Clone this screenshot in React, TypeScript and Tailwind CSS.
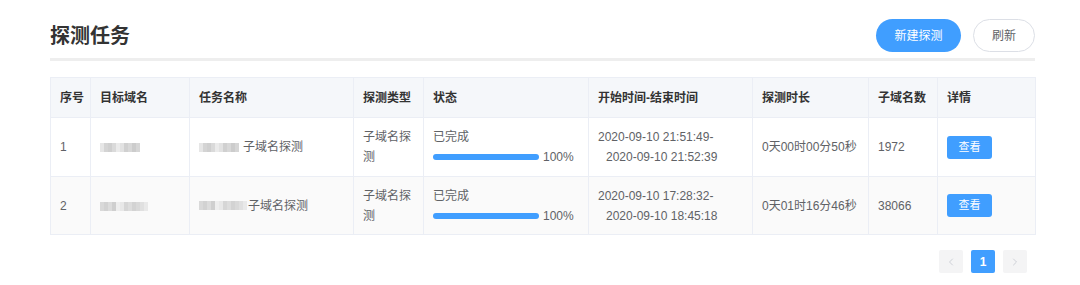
import { ChevronLeft, ChevronRight } from 'lucide-react';

const font = { fontFamily: '"Liberation Sans", "Noto Sans CJK SC", sans-serif' };

// pixelated (redacted) domain names
const mosaicA = ['#e6e6e6', '#d4d4d4', '#cfcfcf', '#dadada', '#ebebeb', '#e2e2e2', '#d0d0d0', '#d8d8d8', '#cccccc', '#d6d6d6'];
const mosaicB = ['#d9d9d9', '#d2d2d2', '#dcdcdc', '#cfcfcf', '#eeeeee', '#e8e8e8', '#d6d6d6', '#dddddd', '#d3d3d3', '#d9d9d9', '#e0e0e0', '#e9e9e9'];

const rows = [
  {
    id: 1,
    mosaic: mosaicA,
    start: '2020-09-10 21:51:49-',
    end: '2020-09-10 21:52:39',
    duration: '0天00时00分50秒',
    count: '1972',
  },
  {
    id: 2,
    mosaic: mosaicB,
    start: '2020-09-10 17:28:32-',
    end: '2020-09-10 18:45:18',
    duration: '0天01时16分46秒',
    count: '38066',
  },
];

const headers = ['序号', '目标域名', '任务名称', '探测类型', '状态', '开始时间-结束时间', '探测时长', '子域名数', '详情'];
const widths = [40, 99, 164, 70, 165, 164, 116, 69, 98];

const Mosaic = ({ cells }: { cells: string[] }) => (
  <span className="inline-flex align-middle">
    {cells.map((c, i) => (
      <span key={i} className="w-[4px] h-[9px]" style={{ backgroundColor: c }} />
    ))}
  </span>
);

const App = () => {
  return (
    <div className="w-[1080px] h-[285px] bg-white" style={font}>
      <div className="ml-[50px] w-[985px] pt-[19px]">
        <div className="flex items-center justify-between h-[33px]">
          <h1 className="text-[20px] font-bold text-[#333]">探测任务</h1>
          <div className="flex gap-3">
            <button className="w-[85px] h-[33px] rounded-full bg-[#409eff] text-white text-[12px]">新建探测</button>
            <button className="w-[62px] h-[33px] rounded-full border border-[#dcdfe6] bg-white text-[#606266] text-[12px]">刷新</button>
          </div>
        </div>
        <div className="mt-[6px] h-[3px] bg-[#eeeeee]" />

        <table className="mt-[16px] w-[985px] table-fixed border-collapse text-[12px]">
          <colgroup>
            {widths.map((w, i) => (
              <col key={i} style={{ width: w }} />
            ))}
          </colgroup>
          <thead>
            <tr className="h-[40px] bg-[#f5f7fa]">
              {headers.map((h) => (
                <th key={h} className="border border-[#ebeef5] pl-[9px] text-left font-bold text-[#333]">
                  {h}
                </th>
              ))}
            </tr>
          </thead>
          <tbody className="text-[#606266]">
            {rows.map((r, i) => (
              <tr key={r.id} className={i === 1 ? 'h-[58px] bg-[#fafafa]' : 'h-[59px] bg-white'}>
                <td className="border border-[#ebeef5] pl-[9px]">{r.id}</td>
                <td className="border border-[#ebeef5] pl-[9px]">
                  <Mosaic cells={r.mosaic} />
                </td>
                <td className="border border-[#ebeef5] pl-[9px]">
                  <Mosaic cells={r.mosaic} />
                  <span className={`align-middle ${i === 0 ? 'ml-[4px]' : 'ml-[1px]'}`}>子域名探测</span>
                </td>
                <td className="border border-[#ebeef5] pl-[9px] pr-[10px] leading-[20px]">子域名探测</td>
                <td className="border border-[#ebeef5] pl-[9px] leading-[20px]">
                  <div>已完成</div>
                  <div className="flex items-center">
                    <div className="w-[106px] h-[6px] rounded-full bg-[#409eff]" />
                    <span className="ml-[4px]">100%</span>
                  </div>
                </td>
                <td className="border border-[#ebeef5] pl-[9px] leading-[20px] whitespace-nowrap">
                  <div>{r.start}</div>
                  <div className="pl-[8px]">{r.end}</div>
                </td>
                <td className="border border-[#ebeef5] pl-[9px] whitespace-nowrap">{r.duration}</td>
                <td className="border border-[#ebeef5] pl-[9px]">{r.count}</td>
                <td className="border border-[#ebeef5] pl-[9px]">
                  <button className="w-[45px] h-[23px] rounded-[3px] bg-[#409eff] text-white text-[11px]">查看</button>
                </td>
              </tr>
            ))}
          </tbody>
        </table>

        <div className="mt-[15px] flex justify-end gap-[8px] pr-[8px]">
          <button className="w-[24px] h-[23px] rounded-[2px] bg-[#f4f4f5] flex items-center justify-center text-[#c0c4cc]">
            <ChevronLeft size={12} strokeWidth={1.5} />
          </button>
          <button className="w-[24px] h-[23px] rounded-[2px] bg-[#409eff] text-white text-[12px] font-bold">1</button>
          <button className="w-[24px] h-[23px] rounded-[2px] bg-[#f4f4f5] flex items-center justify-center text-[#c0c4cc]">
            <ChevronRight size={12} strokeWidth={1.5} />
          </button>
        </div>
      </div>
    </div>
  );
};

export default App;
